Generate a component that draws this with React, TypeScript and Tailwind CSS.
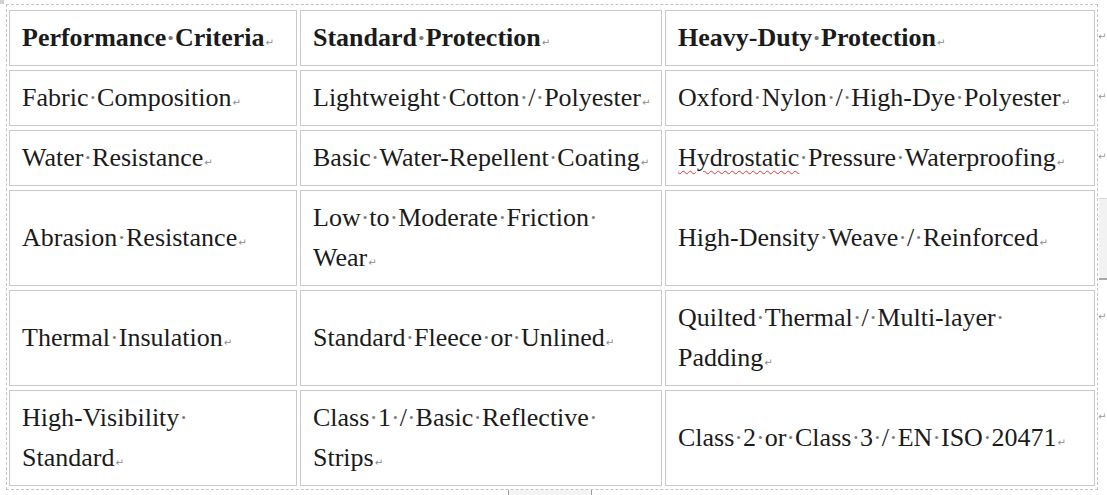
import React from "react";

type Row = {
  tall: boolean;
  header?: boolean;
  cells: string[][];
};

const rows: Row[] = [
  {
    tall: false,
    header: true,
    cells: [["Performance Criteria"], ["Standard Protection"], ["Heavy-Duty Protection"]],
  },
  {
    tall: false,
    cells: [["Fabric Composition"], ["Lightweight Cotton / Polyester"], ["Oxford Nylon / High-Dye Polyester"]],
  },
  {
    tall: false,
    cells: [["Water Resistance"], ["Basic Water-Repellent Coating"], ["Hydrostatic Pressure Waterproofing"]],
  },
  {
    tall: true,
    cells: [["Abrasion Resistance"], ["Low to Moderate Friction ", "Wear"], ["High-Density Weave / Reinforced"]],
  },
  {
    tall: true,
    cells: [["Thermal Insulation"], ["Standard Fleece or Unlined"], ["Quilted Thermal / Multi-layer ", "Padding"]],
  },
  {
    tall: true,
    cells: [["High-Visibility ", "Standard"], ["Class 1 / Basic Reflective ", "Strips"], ["Class 2 or Class 3 / EN ISO 20471"]],
  },
];

const colWidths = ["w-[288px]", "w-[362px]", "w-[430px]"];

function Pilcrow() {
  return (
    <span className="ml-[1px] font-['DejaVu_Sans',sans-serif] text-[10px] font-normal leading-none text-[#8c8c8c]">
      ↵
    </span>
  );
}

function Line({ text, last }: { text: string; last: boolean }) {
  const words = text.split(" ");
  return (
    <div className="whitespace-nowrap">
      {words.map((w, i) => (
        <React.Fragment key={i}>
          {w === "Hydrostatic" ? (
            <span className="underline decoration-wavy decoration-[#e03c3c] decoration-[1px] underline-offset-[4px]">
              {w}
            </span>
          ) : (
            w
          )}
          {i < words.length - 1 && <span className="text-[#7a7a7a]">·</span>}
        </React.Fragment>
      ))}
      {last && <Pilcrow />}
    </div>
  );
}

export default function App() {
  return (
    <div className="relative h-[495px] w-[1107px] overflow-hidden bg-white font-['Liberation_Serif','Times_New_Roman',serif] text-[#1b1b1b]">
      {/* table move handle */}
      <div className="absolute left-0 top-0 h-[4px] w-[4px] bg-[#d0d0d0]" />

      <div className="ml-[6px] mt-[4px] w-[1092px] border border-dashed border-[#c4c4c4] pb-[3px] pl-[2px] pr-[2px] pt-[5px]">
        <div className="flex flex-col gap-[4px]">
          {rows.map((row, r) => (
            <div key={r} className={`flex gap-[3px] ${row.tall ? "h-[96px]" : "h-[56px]"}`}>
              {row.cells.map((lines, c) => (
                <div
                  key={c}
                  className={`${colWidths[c]} flex shrink-0 flex-col justify-center border border-[#c9c9c9] pl-[12px] text-[26px] leading-[40px] ${
                    row.header ? "font-bold" : ""
                  }`}
                >
                  {lines.map((l, i) => (
                    <Line key={i} text={l} last={i === lines.length - 1} />
                  ))}
                </div>
              ))}
              {/* end-of-row mark */}
              <span className="mt-[22px] w-0 self-start whitespace-nowrap font-['DejaVu_Sans',sans-serif] text-[10px] leading-none text-[#9a9a9a]">
                ↵
              </span>
            </div>
          ))}
        </div>
      </div>

      {/* right-side ruler marker */}
      <div className="absolute left-[1099px] top-[198px] h-[82px] w-[8px] border-b-2 border-t border-[#a8a8a8] border-t-[#d8d8d8] bg-[#f2f2f2]" />
      {/* bottom resize marker */}
      <div className="absolute left-[508px] top-[490px] h-[5px] w-[84px] border-x border-[#9a9a9a] bg-[#f4f4f4]" />
    </div>
  );
}
